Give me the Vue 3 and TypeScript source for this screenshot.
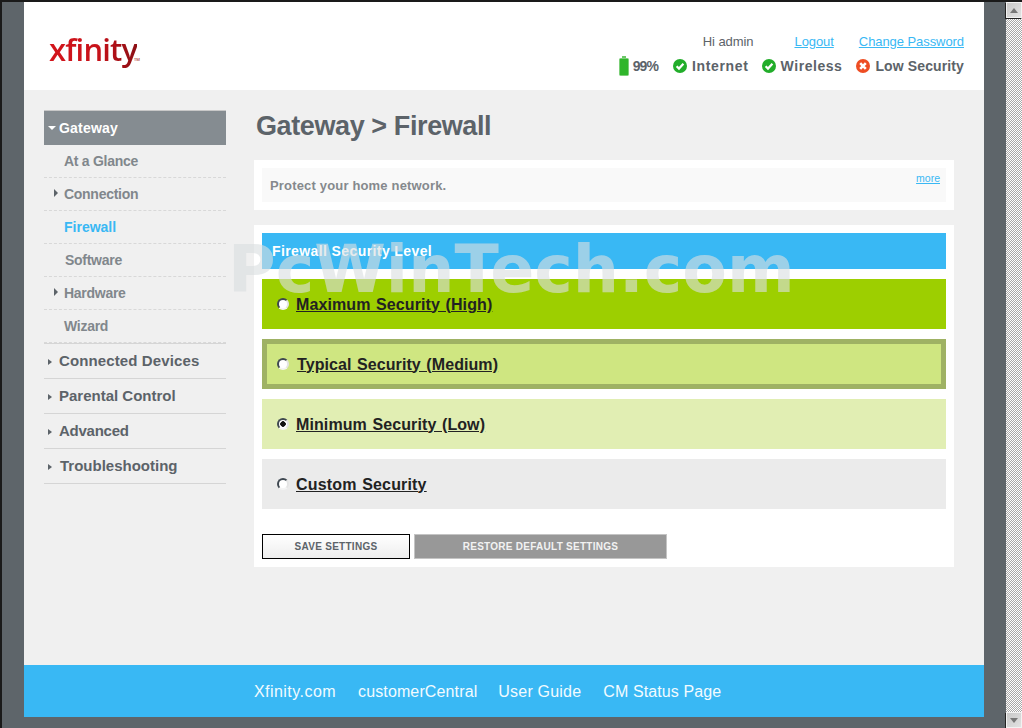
<script setup lang="ts">
const subItems = [
  { label: 'At a Glance', indent: 20, arrow: false, active: false },
  { label: 'Connection', indent: 20, arrow: true, active: false },
  { label: 'Firewall', indent: 20, arrow: false, active: true },
  { label: 'Software', indent: 21, arrow: false, active: false },
  { label: 'Hardware', indent: 20, arrow: true, active: false },
  { label: 'Wizard', indent: 20, arrow: false, active: false },
]
const topItems = ['Connected Devices', 'Parental Control', 'Advanced', 'Troubleshooting']
const levels = [
  { label: 'Maximum Security (High)', cls: 'high', checked: false },
  { label: 'Typical Security (Medium)', cls: 'medium', checked: false },
  { label: 'Minimum Security (Low)', cls: 'low', checked: true },
  { label: 'Custom Security', cls: 'custom', checked: false },
]
const footerLinks = ['Xfinity.com', 'customerCentral', 'User Guide', 'CM Status Page']
</script>

<template>
  <div class="window">
    <div class="page-wrap">
      <div class="page">
        <header class="header">
          <div class="logo">xfinity<span class="tm">TM</span></div>
          <div class="header-right">
            <div class="user-row">
              <span class="hi">Hi admin</span>
              <a class="link logout">Logout</a>
              <a class="link">Change Password</a>
            </div>
            <div class="status-row">
              <span class="status first">
                <svg width="10" height="20" viewBox="0 0 10 20">
                  <rect x="3" y="0" width="4" height="3" fill="#6cc868" />
                  <rect x="0.5" y="2.5" width="9" height="17" rx="1" fill="#2fb52a" stroke="#7ccf78" />
                </svg>
                99%
              </span>
              <span class="status s-net">
                <svg width="14" height="14" viewBox="0 0 14 14">
                  <circle cx="7" cy="7" r="7" fill="#22ad2a" />
                  <path d="M3.6 7.2 L6 9.6 L10.4 4.8" fill="none" stroke="#fff" stroke-width="2.2" />
                </svg>
                Internet
              </span>
              <span class="status s-wifi">
                <svg width="14" height="14" viewBox="0 0 14 14">
                  <circle cx="7" cy="7" r="7" fill="#22ad2a" />
                  <path d="M3.6 7.2 L6 9.6 L10.4 4.8" fill="none" stroke="#fff" stroke-width="2.2" />
                </svg>
                Wireless
              </span>
              <span class="status s-low">
                <svg width="14" height="14" viewBox="0 0 14 14">
                  <circle cx="7" cy="7" r="7" fill="#ee4d23" />
                  <path d="M4.2 4.2 L9.8 9.8 M9.8 4.2 L4.2 9.8" fill="none" stroke="#fff" stroke-width="2.6" />
                </svg>
                Low Security
              </span>
            </div>
          </div>
        </header>

        <div class="main">
          <nav class="sidebar">
            <div class="nav-head"><span class="arrow-down"></span>Gateway</div>
            <div
              v-for="item in subItems"
              :key="item.label"
              class="sub-item"
              :class="{ active: item.active }"
              :style="{ paddingLeft: item.indent + 'px' }"
            >
              <span v-if="item.arrow" class="arrow-sub"></span>{{ item.label }}
            </div>
            <div class="top-list">
              <div v-for="item in topItems" :key="item" class="top-item">
                <span class="arrow-top"></span>{{ item }}
              </div>
            </div>
          </nav>

          <section class="content">
            <h1 class="title">Gateway &gt; Firewall</h1>
            <div class="intro-card">
              <div class="intro">
                <span>Protect your home network.</span>
                <a class="more">more</a>
              </div>
            </div>
            <div class="form-card">
              <div class="form-head">Firewall Security Level</div>
              <div class="levels">
                <label v-for="level in levels" :key="level.label" class="level" :class="level.cls">
                  <input type="radio" name="level" class="radio" :checked="level.checked" />
                  <span class="level-label">{{ level.label }}</span>
                </label>
              </div>
              <div class="actions">
                <button class="btn save">SAVE SETTINGS</button>
                <button class="btn restore">RESTORE DEFAULT SETTINGS</button>
              </div>
            </div>
          </section>
        </div>

        <footer class="footer">
          <a v-for="link in footerLinks" :key="link">{{ link }}</a>
        </footer>
        <div class="watermark">PcWinTech.com</div>
      </div>
    </div>
    <div class="scrollbar">
      <div class="sb-btn"><span class="sb-up"></span></div>
      <div class="sb-btn"><span class="sb-down"></span></div>
    </div>
  </div>
</template>

<style>
html, body { margin: 0; padding: 0; overflow: hidden; }
</style>

<style scoped>
.window {
  width: 1022px;
  height: 728px;
  box-sizing: border-box;
  border-top: 2px solid #1a1a1a;
  border-left: 2px solid #1a1a1a;
  display: flex;
  font-family: "Liberation Sans", Arial, sans-serif;
  overflow: hidden;
}
.page-wrap {
  width: 1004px;
  background: #5e656a;
  padding: 0 22px 11px;
  box-sizing: border-box;
  flex: none;
}
.page {
  position: relative;
  height: 715px;
  background: #f0f0f0;
  display: flex;
  flex-direction: column;
}
.header {
  height: 88px;
  background: #fff;
  display: flex;
  justify-content: space-between;
  flex: none;
}
.logo {
  position: relative;
  margin: 24px 0 0 25px;
  font-family: "Open Sans", sans-serif;
  font-size: 31px;
  line-height: 46px;
  height: 46px;
  font-weight: 600;
  letter-spacing: -0.85px;
  background: linear-gradient(90deg, #d3151c 0%, #c8121a 55%, #8c0f14 100%);
  -webkit-background-clip: text;
  background-clip: text;
  color: transparent;
}
.tm {
  position: absolute;
  left: 85px;
  top: 31px;
  font-size: 4px;
  line-height: 5px;
  letter-spacing: 0;
  color: #a33;
}
.header-right {
  padding: 32px 20px 0 0;
  display: flex;
  flex-direction: column;
  align-items: flex-end;
}
.user-row {
  display: flex;
  font-size: 13px;
  line-height: 16px;
  letter-spacing: -0.07px;
  color: #5c6369;
}
.hi { margin-right: 41px; }
.link {
  color: #39b8f4;
  text-decoration: underline;
}
.logout { margin-right: 25px; }
.status-row {
  display: flex;
  margin-top: 6px;
  font-size: 14px;
  line-height: 20px;
  font-weight: bold;
  color: #5c6369;
}
.status {
  display: flex;
  align-items: center;
  gap: 5px;
  margin-left: 14px;
  white-space: nowrap;
}
.status.first { letter-spacing: -0.9px; gap: 4px; }
.s-net { letter-spacing: 0.65px; margin-left: 15px; }
.s-wifi { letter-spacing: 0.55px; margin-left: 13px; }
.s-low { letter-spacing: 0.12px; }
.main {
  flex: 1;
  display: flex;
  padding: 20px 30px 0 20px;
}
.sidebar {
  width: 182px;
  flex: none;
}
.nav-head {
  height: 34px;
  border-top: 1px solid #c8c8c8;
  background: #858c91;
  color: #fff;
  font-weight: bold;
  font-size: 14px;
  letter-spacing: 0.2px;
  line-height: 34px;
  padding-left: 4px;
  display: flex;
  align-items: center;
}
.arrow-down {
  width: 0;
  height: 0;
  border: 4px solid transparent;
  border-top: 4px solid #fff;
  border-bottom: 0;
  margin-right: 3px;
}
.sub-item {
  height: 32px;
  line-height: 32px;
  border-bottom: 1px dashed #d8d8d8;
  font-size: 14px;
  font-weight: bold;
  letter-spacing: -0.28px;
  color: #81878c;
  box-sizing: content-box;
  position: relative;
}
.sub-item.active { color: #39b8f4; letter-spacing: 0; }
.arrow-sub {
  position: absolute;
  left: 10px;
  top: 11px;
  width: 0;
  height: 0;
  border: 4px solid transparent;
  border-left: 4px solid #5c6369;
  border-right: 0;
}
.top-list { border-top: 1px solid #d5d5d5; }
.top-item {
  height: 34px;
  line-height: 33px;
  border-bottom: 1px solid #d5d5d5;
  font-size: 15px;
  font-weight: bold;
  color: #5c6369;
  padding-left: 15px;
  position: relative;
}
.top-item:nth-child(1) { letter-spacing: 0.12px; }
.top-item:nth-child(3) { letter-spacing: -0.25px; }
.top-item:nth-child(4) { padding-left: 16px; }
.arrow-top {
  position: absolute;
  left: 4px;
  top: 15px;
  width: 0;
  height: 0;
  border: 3.5px solid transparent;
  border-left: 4px solid #5c6369;
  border-right: 0;
}
.content {
  margin-left: 28px;
  width: 700px;
}
.title {
  margin: 0;
  height: 49px;
  padding: 1px 0 0 2px;
  font-size: 27px;
  line-height: 30px;
  letter-spacing: -0.4px;
  font-weight: bold;
  color: #5c6369;
}
.intro-card {
  background: #fff;
  padding: 8px;
  height: 34px;
}
.intro {
  height: 34px;
  background: #f9f9f9;
  display: flex;
  justify-content: space-between;
  padding: 0 6px 0 8px;
  font-size: 13px;
  font-weight: bold;
  letter-spacing: 0.17px;
  line-height: 36px;
  color: #85898d;
}
.more {
  font-size: 10.5px;
  font-weight: normal;
  letter-spacing: 0;
  line-height: 20px;
  color: #39b8f4;
  text-decoration: underline;
}
.form-card {
  margin-top: 15px;
  background: #fff;
  padding: 8px;
  height: 326px;
}
.form-head {
  height: 36px;
  line-height: 36px;
  background: #39b8f4;
  color: #fff;
  font-size: 14px;
  font-weight: bold;
  letter-spacing: 0.4px;
  padding-left: 10px;
}
.levels {
  display: flex;
  flex-direction: column;
  gap: 10px;
  margin-top: 10px;
}
.level {
  height: 50px;
  box-sizing: border-box;
  display: flex;
  align-items: center;
  padding-left: 15px;
  gap: 7px;
  cursor: pointer;
}
.high { background: #9dcf00; }
.medium { background: #cfe681; border: 5px solid #9fb264; padding-left: 10px; gap: 8px; }
.low { background: #e1eeb3; }
.custom { background: #ebebeb; }
.radio {
  appearance: none;
  -webkit-appearance: none;
  margin: 0;
  width: 12px;
  height: 12px;
  box-sizing: border-box;
  border-radius: 50%;
  border: 2px solid;
  border-color: #3f4850 #e4e4e4 #f4f4f4 #3f4850;
  background: #fff;
}
.radio:checked {
  background: radial-gradient(circle, #111 0 2.5px, #fff 3px);
}
.level-label {
  font-size: 16px;
  line-height: 20px;
  padding-top: 1px;
  font-weight: bold;
  color: #222;
  text-decoration: underline;
  word-spacing: 1px;
  letter-spacing: 0.1px;
}
.medium .level-label { letter-spacing: 0.08px; }
.custom .level-label { letter-spacing: 0.17px; }
.actions {
  display: flex;
  gap: 4px;
  margin-top: 25px;
}
.btn {
  height: 25px;
  box-sizing: border-box;
  padding: 0;
  font-family: "Liberation Sans", Arial, sans-serif;
  font-size: 10px;
  font-weight: bold;
  letter-spacing: 0.27px;
}
.save {
  width: 148px;
  border: 1px solid #000;
  background: linear-gradient(#fff, #eee);
  color: #5c6369;
}
.restore {
  width: 253px;
  border: 1px solid #c4c4c4;
  background: #989898;
  color: #f2f2f2;
}
.footer {
  height: 52px;
  box-sizing: border-box;
  padding: 1px 0 0 230px;
  flex: none;
  background: #39b8f4;
  display: flex;
  align-items: center;
  gap: 22px;
  font-size: 16px;
  color: #f2fbff;
}
.footer a:nth-child(1) { letter-spacing: 0.45px; }
.footer a:nth-child(2) { letter-spacing: 0.13px; }
.footer a:nth-child(3) { letter-spacing: 0.2px; margin-left: -1px; }
.footer a:nth-child(4) { letter-spacing: 0.1px; }
.watermark {
  position: absolute;
  left: 204px;
  top: 226px;
  font-family: "DejaVu Sans", sans-serif;
  font-size: 65px;
  line-height: 84px;
  font-weight: 700;
  color: rgba(218, 222, 224, 0.62);
  white-space: nowrap;
  pointer-events: none;
}
.scrollbar {
  flex: 1;
  display: flex;
  flex-direction: column;
  justify-content: space-between;
  background-color: #fff;
  background-image: conic-gradient(#a8a8a8 25%, #fff 0 50%, #a8a8a8 0 75%, #fff 0);
  background-size: 2px 2px;
}
.sb-btn {
  height: 16px;
  box-sizing: border-box;
  background: linear-gradient(135deg, #c8c8c8, #e2e2e2);
  border: 1px solid #f2f2f2;
  box-shadow: -1px 1px 0 #222;
  display: flex;
  align-items: center;
  justify-content: center;
}
.sb-up {
  width: 0;
  height: 0;
  border: 4px solid transparent;
  border-bottom: 5px solid #777;
  border-top: 0;
}
.sb-down {
  width: 0;
  height: 0;
  border: 4px solid transparent;
  border-top: 5px solid #777;
  border-bottom: 0;
}
</style>
